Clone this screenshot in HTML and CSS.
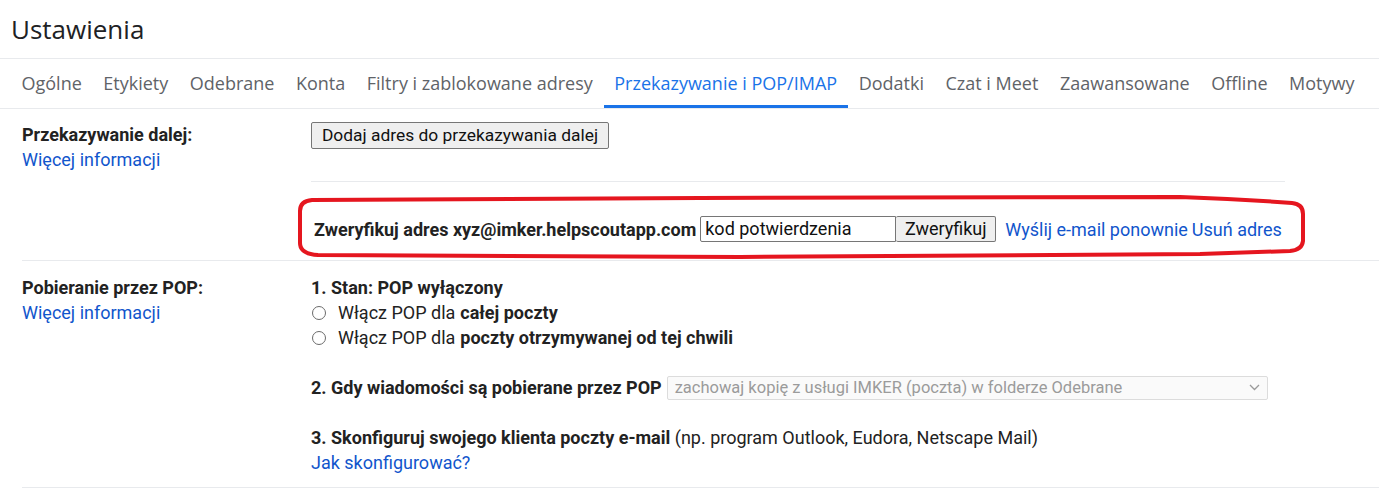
FILE: index.html
```html
<!DOCTYPE html>
<html lang="pl">
<head>
<meta charset="utf-8">
<title>Ustawienia</title>
<link rel="stylesheet" href="styles.css">
</head>
<body>
<div class="page">
  <header class="title">Ustawienia</header>
  <nav class="tabs">
    <span class="tab">Ogólne</span>
    <span class="tab">Etykiety</span>
    <span class="tab">Odebrane</span>
    <span class="tab">Konta</span>
    <span class="tab">Filtry i zablokowane adresy</span>
    <span class="tab active">Przekazywanie i POP/IMAP</span>
    <span class="tab">Dodatki</span>
    <span class="tab">Czat i Meet</span>
    <span class="tab">Zaawansowane</span>
    <span class="tab">Offline</span>
    <span class="tab">Motywy</span>
  </nav>

  <section class="section fwd">
    <div class="label">
      <div class="label-title">Przekazywanie dalej:</div>
      <a class="link">Więcej informacji</a>
    </div>
    <div class="body">
      <button class="btn add">Dodaj adres do przekazywania dalej</button>
      <div class="inner-line"></div>
      <div class="verify">
        <span class="strong">Zweryfikuj adres xyz@imker.helpscoutapp.com</span>
        <span class="input">kod potwierdzenia</span><button class="btn verify-btn">Zweryfikuj</button>
        <a class="link resend">Wyślij e-mail ponownie</a>
        <a class="link">Usuń adres</a>
      </div>
    </div>
  </section>

  <section class="section pop">
    <div class="label">
      <div class="label-title">Pobieranie przez POP:</div>
      <a class="link">Więcej informacji</a>
    </div>
    <div class="body">
      <div class="strong">1. Stan: POP wyłączony</div>
      <div class="radio-row"><span class="radio"></span>Włącz POP dla <b class="strong">całej poczty</b></div>
      <div class="radio-row"><span class="radio"></span>Włącz POP dla <b class="strong">poczty otrzymywanej od tej chwili</b></div>
      <div class="step2">
        <span class="strong">2. Gdy wiadomości są pobierane przez POP</span>
        <div class="select">
          <span>zachowaj kopię z usługi IMKER (poczta) w folderze Odebrane</span>
          <svg class="chev" width="11" height="7" viewBox="0 0 11 7"><path d="M1 1l4.5 4.5L10 1" fill="none" stroke="#9a9a9a" stroke-width="1.3"/></svg>
        </div>
      </div>
      <div class="step3"><span class="strong">3. Skonfiguruj swojego klienta poczty e-mail</span> (np. program Outlook, Eudora, Netscape Mail)</div>
      <a class="link">Jak skonfigurować?</a>
    </div>
  </section>

  <svg class="mark" width="1379" height="488" viewBox="0 0 1379 488">
    <path d="M312 200 L700 198 L1180 197 Q1240 199 1292 203 Q1303 204 1303 214 L1303 241 Q1302 250 1290 251 L1200 254 L740 257 L318 255 Q300 254 300 243 L300 211 Q300 201 312 200 Z" fill="none" stroke="#e5161f" stroke-width="4" stroke-linejoin="round"/>
  </svg>
</div>
</body>
</html>
```
FILE: styles.css
```css
* { box-sizing: border-box; }
html, body { margin: 0; padding: 0; background: #fff; }
body {
  font-family: Roboto, "Liberation Sans", Arial, sans-serif;
  font-size: 18px;
  color: #222;
}
.page { position: relative; width: 1379px; height: 488px; overflow: hidden; }

.title {
  font-family: "Open Sans", Roboto, sans-serif;
  font-size: 26px;
  color: #202124;
  height: 59px;
  padding: 12px 0 0 11px;
  line-height: 34px;
  border-bottom: 1px solid #e8eaed;
}

.tabs {
  display: flex;
  padding-left: 11px;
  height: 50px;
  border-bottom: 1px solid #e8eaed;
}
.tab {
  font-family: "Open Sans", Roboto, sans-serif;
  font-size: 18px;
  color: #5f6368;
  padding: 0 10.75px;
  line-height: 48px;
  border-bottom: 3px solid transparent;
  white-space: nowrap;
}
.tab:first-child { padding-left: 10.5px; }
.tab.active { color: #1a73e8; border-bottom-color: #1a73e8; }

.section {
  display: grid;
  grid-template-columns: 289px 1fr;
  margin-left: 22px;
  border-bottom: 1px solid #e8eaed;
  line-height: 25px;
}
.label-title { font-weight: 700; color: #222; }
.link { color: #1155cc; text-decoration: none; cursor: pointer; }
.strong { font-weight: 700; color: #222; }

.fwd { padding: 13px 0 16px; height: 152px; }
.btn {
  font-family: Roboto, "Liberation Sans", sans-serif;
  font-size: 18px;
  color: #111;
  background: #efefef;
  border: 1px solid #767676;
  border-radius: 2px;
  height: 27px;
  padding: 0 9px;
  line-height: 25px;
}
.add { font-size: 17.4px; width: 298px; padding: 0; }
.inner-line { width: 974px; height: 1px; background: #e8eaed; margin: 32px 0 34px; }
.verify { display: flex; align-items: center; padding-left: 3px; height: 26px; }
.verify .strong { margin-right: 4px; }
.input {
  display: inline-block;
  width: 196px;
  height: 26px;
  border: 1px solid #767676;
  border-radius: 2px 0 0 2px;
  padding: 0 4px;
  line-height: 24px;
  color: #111;
}
.verify-btn { height: 26px; width: 100px; padding: 0; border-left: none; line-height: 24px; }
.resend { margin-left: 9px; margin-right: 4px; }

.pop { padding: 14px 0 12px; }
.radio-row { display: flex; align-items: center; padding-left: 1px; }
.radio-row .strong { margin-left: 5px; }
.radio {
  width: 14px; height: 14px;
  border: 1px solid #6b6b6b;
  border-radius: 50%;
  margin-right: 12px;
  flex: none;
}
.step2 { display: flex; align-items: center; margin-top: 25px; height: 25px; }
.select {
  margin-left: 5px;
  width: 601px;
  height: 24px;
  border: 1px solid #dcdcdc;
  border-radius: 2px;
  background: #fafafa;
  color: #9b9b9b;
  font-size: 16.5px;
  display: flex;
  align-items: center;
  justify-content: space-between;
  padding: 0 7px 0 7px;
  line-height: 22px;
}
.chev { flex: none; }
.step3 { margin-top: 25px; }

.mark { position: absolute; left: 0; top: 0; pointer-events: none; }
```
